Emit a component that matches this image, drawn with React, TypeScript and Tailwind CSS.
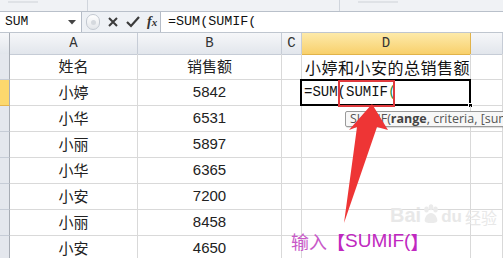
import React from "react";

const cjk = "font-[family-name:'SimSun','Noto_Sans_CJK_SC',sans-serif]";
const mono = "font-[family-name:'Liberation_Mono','Noto_Sans_CJK_SC',monospace]";
const sans = "font-[family-name:'Liberation_Sans',sans-serif]";

const rows: [string, string][] = [
  ["姓名", "销售额"],
  ["小婷", "5842"],
  ["小华", "6531"],
  ["小丽", "5897"],
  ["小华", "6365"],
  ["小安", "7200"],
  ["小丽", "8458"],
  ["小安", "4650"],
];

const cols = "grid grid-cols-[10px_128px_144px_20px_169px_1fr]";

function ColumnHeader() {
  const cell =
    "flex items-center justify-center border-r border-b border-[#c6ccd6] bg-gradient-to-b from-[#f6f7f9] to-[#e2e6ec] text-[14px] text-[#333]";
  return (
    <div className={`${cols} h-[21px]`}>
      <div className={`${cell} border-r-[#a7acb4]`} />
      <div className={`${cell} ${mono}`}>A</div>
      <div className={`${cell} ${mono}`}>B</div>
      <div className={`${cell} ${mono}`}>C</div>
      <div
        className={`flex items-center justify-center border-r border-b border-[#e1b34a] bg-gradient-to-b from-[#fdeaa9] to-[#f8d06b] text-[14px] text-[#333] ${mono}`}
      >
        D
      </div>
      <div className={cell} />
    </div>
  );
}

function Row({ a, b, i }: { a: string; b: string; i: number }) {
  const grid = "border-r border-b border-[#d9d9d9]";
  const selected = i === 1;
  return (
    <div className={`${cols} h-[26px]`}>
      <div
        className={`border-b border-r ${
          selected
            ? "bg-[#fcd86d] border-b-[#e6b54b] border-r-[#a7acb4]"
            : "bg-[#e4e7ed] border-b-[#c6ccd6] border-r-[#a7acb4]"
        }`}
      />
      <div className={`${grid} flex items-center justify-center ${cjk} text-[15px] text-[#222]`}>{a}</div>
      <div
        className={`${grid} flex items-center justify-center ${
          i === 0 ? cjk : sans
        } text-[15px] text-[#222]`}
      >
        {b}
      </div>
      <div className={grid} />
      <div className={`${grid} relative flex items-center ${cjk} text-[16px] text-[#111]`}>
        {i === 0 && <span className="pl-[3px] tracking-[0.5px]">小婷和小安的总销售额</span>}
        {selected && (
          <>
            <div className="absolute -left-[2px] -top-[1px] right-[-1px] bottom-[-1px] border-[2.5px] border-black" />
            <div className="absolute right-[-3px] bottom-[-3px] w-[5px] h-[5px] bg-black border border-white" />
            <span className={`relative pl-[2px] ${mono} text-[14px]`}>
              =SUM(SUMIF<span className="text-[#1f8a3a]">(</span>
            </span>
            <div className="absolute left-[36px] top-0 w-[57px] h-[27px] border-[2px] border-[#e03a3e]" />
          </>
        )}
      </div>
      <div className={grid} />
    </div>
  );
}

export default function App() {
  return (
    <div className="relative w-[503px] h-[258px] overflow-hidden bg-white select-none">
      {/* ribbon bottom */}
      <div className="h-[12px] flex bg-[#f0f2f5] border-b border-[#b9c0ca]">
        <div className="w-[88px] border-r border-[#d0d5dc] flex items-start pl-[8px]">
          <div className="mt-[1px] h-[2px] w-[30px] bg-[#dfe2e6]" />
        </div>
        <div className="w-[252px] border-r border-[#d0d5dc]" />
        <div className="flex-1 flex items-start pl-[18px]">
          <div className="mt-[1px] h-[2px] w-[40px] bg-[#dfe2e6]" />
        </div>
      </div>
      {/* formula bar */}
      <div className="h-[21px] flex bg-[#eef1f5] border-b border-[#bfc6cf]">
        <div className={`w-[82px] bg-white border-r border-[#b5bcc7] flex items-center justify-between px-[5px] ${mono} text-[13px] text-[#111]`}>
          <span>SUM</span>
          <svg width="8" height="5" viewBox="0 0 8 5">
            <path d="M0 0h8L4 4.5z" fill="#444" />
          </svg>
        </div>
        <div className="w-[78px] flex items-center gap-[7px] pl-[4px]">
          <div className="w-[14px] h-[16px] rounded-full border border-[#c3c9d1] bg-gradient-to-b from-white to-[#e3e6ea] flex items-center justify-center">
            <div className="w-[5px] h-[5px] rounded-full bg-[#d5d9de]" />
          </div>
          <svg width="12" height="12" viewBox="0 0 12 12">
            <path d="M2 2l8 8M10 2l-8 8" stroke="#3b3b3b" strokeWidth="2" />
          </svg>
          <svg width="14" height="12" viewBox="0 0 14 12">
            <path d="M1 6l4 4 8-9" stroke="#3b3b3b" strokeWidth="2.2" fill="none" />
          </svg>
          <span className="font-[family-name:'Liberation_Serif',serif] italic font-bold text-[14px] text-[#333] leading-none">
            f<span className="text-[11px]">x</span>
          </span>
        </div>
        <div className={`flex-1 bg-white border-l border-[#b5bcc7] flex items-center pl-[7px] ${mono} text-[13.4px] text-[#111]`}>
          =SUM(SUMIF(
        </div>
      </div>
      {/* sheet */}
      <div className="bg-white">
        <ColumnHeader />
        {rows.map(([a, b], i) => (
          <Row key={i} a={a} b={b} i={i} />
        ))}
      </div>
      {/* tooltip */}
      <div className="absolute left-[345px] top-[111px] w-[170px] h-[16px] pl-[4px] flex items-center overflow-hidden rounded-[2px] border border-[#9a9a9a] bg-[#f7f7f7] shadow-[1px_1px_1px_rgba(0,0,0,0.15)] font-[family-name:'Open_Sans','Liberation_Sans',sans-serif] text-[12.5px] text-[#555] whitespace-nowrap">
        SUMIF(<b className="text-[#444]">range</b>, criteria, [sum
      </div>
      {/* watermark */}
      <div className={`absolute left-[390px] top-[204px] flex items-end gap-[1px] whitespace-nowrap text-[#e8e8e8] ${sans} font-bold leading-none`}>
        <span className="text-[20px]">Bai</span>
        <svg width="18" height="20" viewBox="0 0 20 22" className="mb-[1px]">
          <g fill="#ebebeb">
            <ellipse cx="5" cy="6" rx="2.5" ry="3.2" />
            <ellipse cx="10" cy="3.5" rx="2.5" ry="3.2" />
            <ellipse cx="15" cy="6" rx="2.5" ry="3.2" />
            <path d="M10 10c4 0 7 5 7 8s-3 3-7 3-7 0-7-3 3-8 7-8z" />
          </g>
        </svg>
        <span className="text-[17px]">du</span>
        <span className={`${cjk} text-[16px] font-normal ml-[2px]`}>经验</span>
      </div>
      {/* arrow */}
      <svg className="absolute inset-0" width="503" height="258" viewBox="0 0 503 258">
        <polygon points="372,104 388,130 377,127 344,223 357,127 349,130" fill="#ee3535" />
      </svg>
      {/* caption */}
      <div className={`absolute left-[291px] top-[231px] flex items-end whitespace-nowrap ${cjk} text-[18px] leading-none`}>
        <span className="text-[#c85ac8]">输入</span>
        <span className="font-bold text-[#c028c0]">【</span>
        <span className={`${sans} text-[#c028c0] text-[19px]`}>SUMIF(</span>
        <span className="font-bold text-[#c028c0]">】</span>
      </div>
    </div>
  );
}
